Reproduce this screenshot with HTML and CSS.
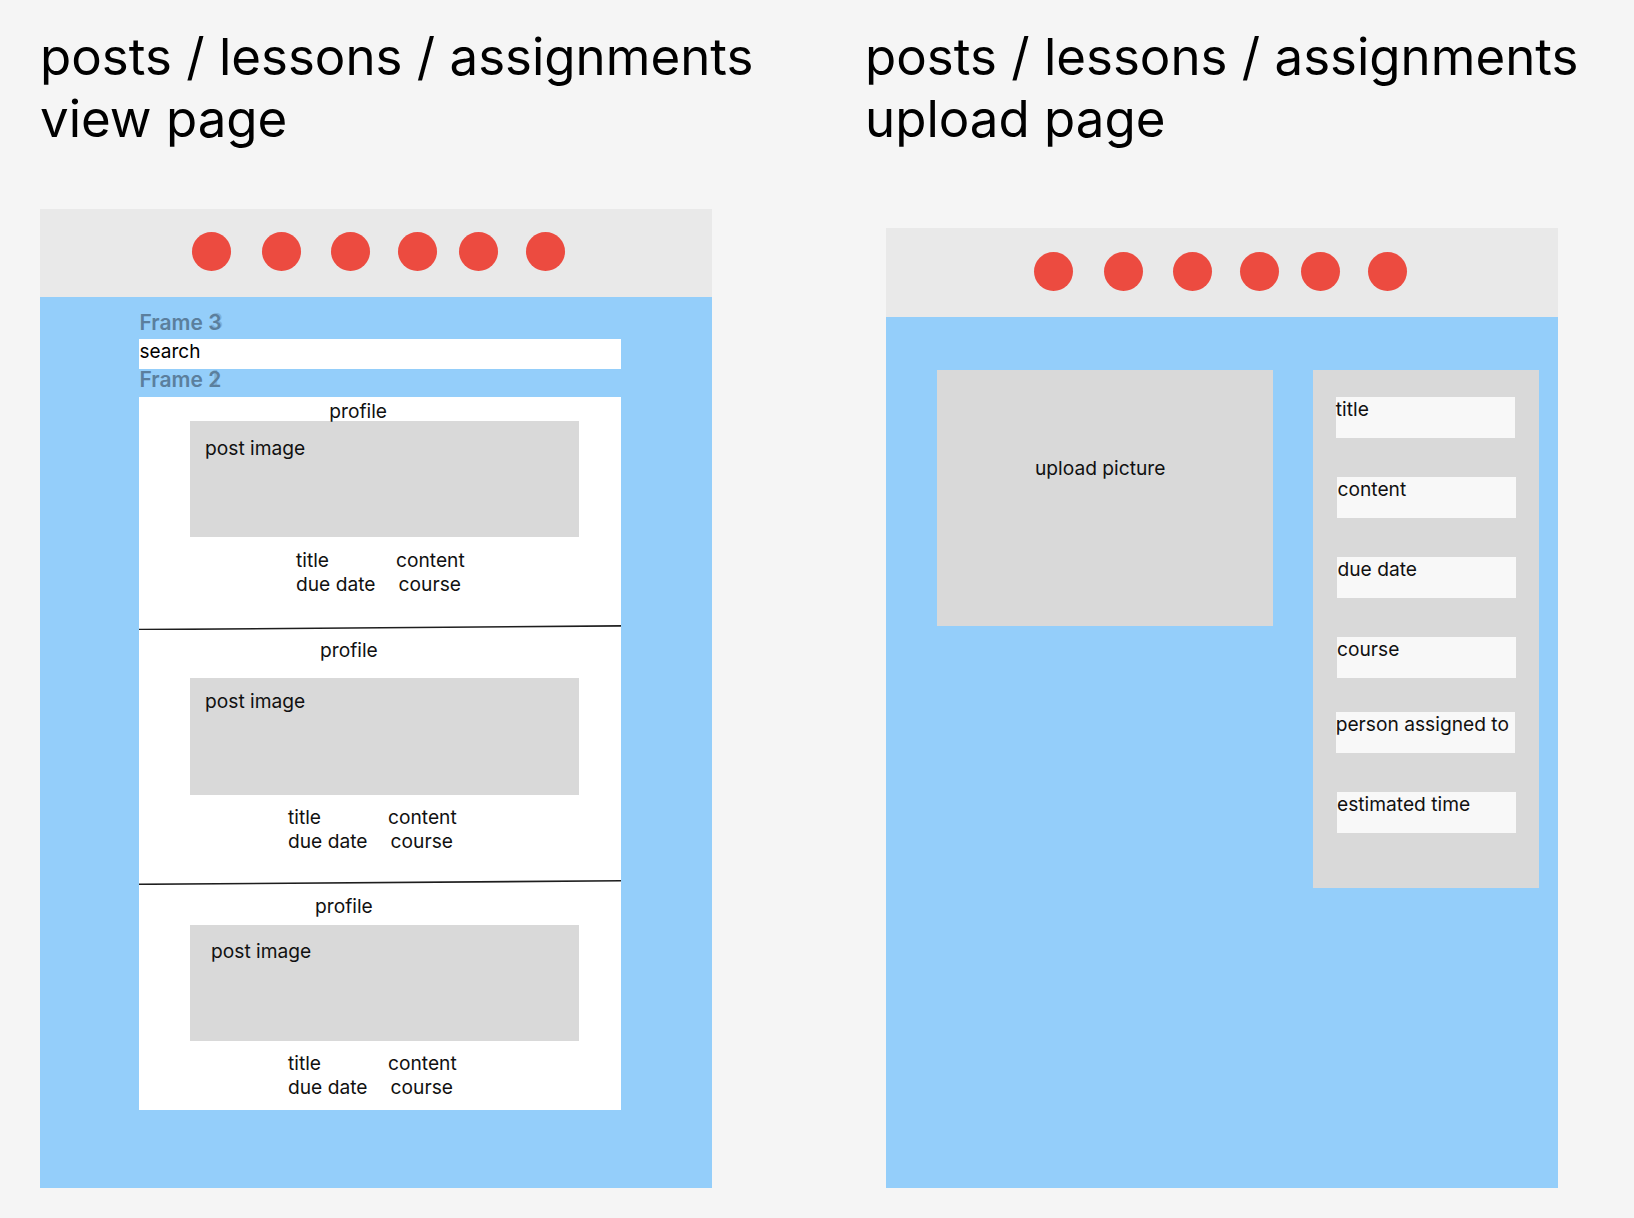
FILE: index.html
```html
<!DOCTYPE html>
<html lang="en">
<head>
<meta charset="utf-8">
<title>posts / lessons / assignments</title>
<link rel="stylesheet" href="styles.css">
</head>
<body>
<div class="board">
  <section class="col col--view">
    <h1 class="heading">posts / lessons / assignments<br>view page</h1>
    <div class="frame frame--view">
      <div class="frame-head">
        <div class="dots">
          <span class="dot"></span><span class="dot"></span><span class="dot"></span>
          <span class="dot"></span><span class="dot"></span><span class="dot"></span>
        </div>
      </div>
      <div class="frame-body frame-body--view">
        <div class="feed">
          <div class="frame-label">Frame <span class="num">3<span class="ghost">3</span></span></div>
          <div class="search">search</div>
          <div class="frame-label frame-label--second">Frame <span class="num">2<span class="ghost">1</span></span></div>
          <div class="posts">
            <article class="post post--a">
              <div class="profile">profile</div>
              <div class="post-image"><span>post image</span></div>
              <div class="meta">
                <span>title</span><span>content</span>
                <span>due date</span><span class="meta-course">course</span>
              </div>
            </article>
            <svg class="divider" viewBox="0 0 482 5" preserveAspectRatio="none"><line x1="0" y1="4.6" x2="482" y2="0.9" stroke="#1e1e1e" stroke-width="1.6"/></svg>
            <article class="post post--b">
              <div class="profile">profile</div>
              <div class="post-image"><span>post image</span></div>
              <div class="meta">
                <span>title</span><span>content</span>
                <span>due date</span><span class="meta-course">course</span>
              </div>
            </article>
            <svg class="divider" viewBox="0 0 482 5" preserveAspectRatio="none"><line x1="0" y1="4.3" x2="482" y2="0.8" stroke="#1e1e1e" stroke-width="1.6"/></svg>
            <article class="post post--c">
              <div class="profile">profile</div>
              <div class="post-image"><span>post image</span></div>
              <div class="meta">
                <span>title</span><span>content</span>
                <span>due date</span><span class="meta-course">course</span>
              </div>
            </article>
          </div>
        </div>
      </div>
    </div>
  </section>

  <section class="col col--upload">
    <h1 class="heading">posts / lessons / assignments<br>upload page</h1>
    <div class="frame frame--upload">
      <div class="frame-head">
        <div class="dots">
          <span class="dot"></span><span class="dot"></span><span class="dot"></span>
          <span class="dot"></span><span class="dot"></span><span class="dot"></span>
        </div>
      </div>
      <div class="frame-body frame-body--upload">
        <div class="upload-box">upload picture</div>
        <div class="form-panel">
          <div class="field">title</div>
          <div class="field field--in">content</div>
          <div class="field field--in">due date</div>
          <div class="field field--mid">course</div>
          <div class="field field--tight">person assigned to</div>
          <div class="field field--mid">estimated time</div>
        </div>
      </div>
    </div>
  </section>
</div>
</body>
</html>
```

FILE: styles.css
```css
* { box-sizing: border-box; }

html, body {
  margin: 0;
  padding: 0;
}

body {
  background: #f5f5f5;
  font-family: Inter, "Noto Sans", "Liberation Sans", sans-serif;
  color: #000;
  width: 1634px;
  height: 1218px;
  overflow: hidden;
}

.board {
  display: flex;
  padding: 25.5px 0 0 40px;
}

.col--view { width: 825px; }
.col--upload { width: 769px; }

.heading {
  margin: 0;
  font-size: 51px;
  font-weight: 400;
  line-height: 62px;
  letter-spacing: 0;
  white-space: nowrap;
}

.frame {
  width: 672px;
  display: flex;
  flex-direction: column;
}

.frame--view { margin-top: 59.5px; height: 979px; }
.frame--upload { margin-top: 78.5px; margin-left: 21px; height: 960px; }

.frame-head {
  background: #e9e9e9;
  height: 88px;
  padding-top: 23px;
  flex: none;
}
.frame--upload .frame-head { height: 89px; padding-top: 24px; }

.dots {
  display: flex;
  padding-left: 151.5px;
}
.frame--upload .dots { padding-left: 148px; }

.dot {
  width: 39px;
  height: 39px;
  border-radius: 50%;
  background: #ec4b40;
  flex: none;
}
.dot:nth-child(2) { margin-left: 31px; }
.dot:nth-child(3) { margin-left: 30px; }
.dot:nth-child(4) { margin-left: 28px; }
.dot:nth-child(5) { margin-left: 22px; }
.dot:nth-child(6) { margin-left: 28px; }

.frame-body {
  background: #94cefa;
  flex: 1;
}

/* view page */
.frame-body--view { padding: 14.4px 0 0 98.5px; }

.feed { width: 482px; }

.frame-label {
  font-size: 21px;
  font-weight: 600;
  line-height: 24px;
  color: #5b7f9d;
  padding-left: 1px;
}
.frame-label--second { margin-top: -1px; }

.num { position: relative; }
.ghost {
  position: absolute;
  left: 1.5px;
  top: 0;
  opacity: 0.35;
}

.search {
  margin-top: 3.6px;
  background: #fff;
  height: 30.3px;
  line-height: 26px;
  font-size: 19px;
  padding: 0.5px 0 0 1px;
}

.posts {
  margin-top: 4.9px;
  background: #fff;
  font-size: 19.2px;
  line-height: 24px;
  color: #111;
}

.divider {
  display: block;
  width: 482px;
  height: 5px;
}

.post-image {
  margin-left: 51.5px;
  width: 389px;
  height: 116.5px;
  background: #d9d9d9;
}

.meta {
  display: grid;
  grid-template-columns: 100px auto;
  width: 200px;
}
.meta-course { padding-left: 2.6px; }

.post--a { padding: 1.9px 0 28.9px; }
.post--a .profile { padding-left: 190.8px; }
.post--a .post-image { margin-top: -2.2px; padding: 15px 0 0 15px; }
.post--a .meta { margin: 10.8px 0 0 157.5px; }

.post--b { padding: 8.4px 0 26.8px; }
.post--b .profile { padding-left: 181.5px; }
.post--b .post-image { margin-top: 15.9px; padding: 11.1px 0 0 15px; }
.post--b .meta { margin: 10px 0 0 149.5px; }

.post--c { padding: 8.9px 0 10.6px; }
.post--c .profile { padding-left: 176.5px; }
.post--c .post-image { margin-top: 7.1px; padding: 14.7px 0 0 21px; }
.post--c .meta { margin: 10.1px 0 0 149.5px; }

/* upload page */
.frame-body--upload {
  display: flex;
  align-items: flex-start;
  padding: 53px 0 0 51px;
  font-size: 19.2px;
  line-height: 24px;
  color: #111;
}

.upload-box {
  width: 336px;
  height: 255.7px;
  background: #d9d9d9;
  padding: 86.3px 0 0 98px;
}

.form-panel {
  margin-left: 40.3px;
  width: 225.5px;
  height: 517.7px;
  background: #d9d9d9;
  padding-top: 27px;
}

.field {
  width: 179px;
  height: 41.3px;
  background: #f8f8f8;
  padding-top: 0.3px;
  margin: 38.7px 0 0 22.5px;
}
.field:first-child { margin-top: 0; }
.field--in { margin-left: 24.2px; }
.field--mid { margin-left: 23.7px; margin-top: 38.4px; }
.field--tight { margin-top: 34px; margin-left: 22.4px; }
```
